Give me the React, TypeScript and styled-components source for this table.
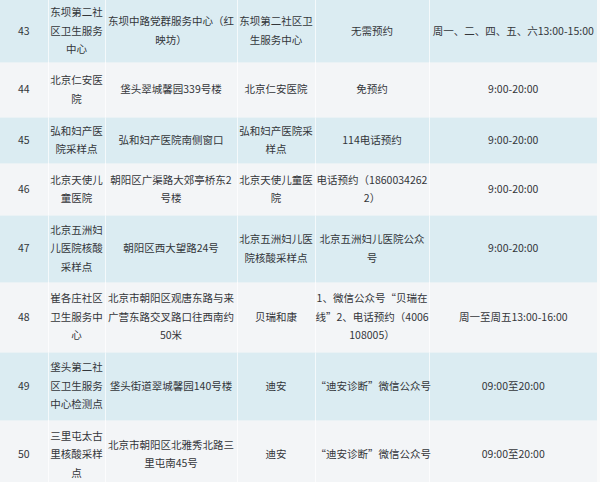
import React from 'react';
import styled, { createGlobalStyle } from 'styled-components';

const GlobalStyle = createGlobalStyle`
  html, body {
    margin: 0;
    padding: 0;
    background: #fafafa;
    overflow: hidden;
  }
  body {
    font-family: "Noto Sans CJK SC", "Noto Sans", sans-serif;
  }
`;

const Page = styled.div`
  width: 600px;
  height: 482px;
  overflow: hidden;
  background: #fafafa;
`;

const Table = styled.table`
  width: 597px;
  table-layout: fixed;
  border-collapse: collapse;
  color: #33363a;
  font-size: 10.5px;
  line-height: 18.5px;
`;

const Row = styled.tr<{ $tinted: boolean; $h: number }>`
  height: ${p => p.$h}px;
  background: ${p => (p.$tinted ? '#dbecf2' : '#f3f5f7')};
  & + & {
    border-top: 1px solid ${p => (p.$tinted ? '#eef5f8' : '#eaf2f5')};
  }
`;

const Cell = styled.td`
  padding: 0;
  text-align: center;
  vertical-align: middle;
  & + & {
    border-left: 1px solid rgba(255, 255, 255, 0.7);
  }
`;

const Line = styled.span`
  display: block;
  white-space: nowrap;
`;

type RowData = {
  no: string;
  h: number;
  cells: string[][];
};

const rows: RowData[] = [
  {
    no: '43',
    h: 62,
    cells: [
      ['东坝第二社', '区卫生服务', '中心'],
      ['东坝中路党群服务中心（红', '映坊）'],
      ['东坝第二社区卫', '生服务中心'],
      ['无需预约'],
      ['周一、二、四、五、六13:00-15:00'],
    ],
  },
  {
    no: '44',
    h: 55,
    cells: [
      ['北京仁安医', '院'],
      ['垡头翠城馨园339号楼'],
      ['北京仁安医院'],
      ['免预约'],
      ['9:00-20:00'],
    ],
  },
  {
    no: '45',
    h: 46,
    cells: [
      ['弘和妇产医', '院采样点'],
      ['弘和妇产医院南侧窗口'],
      ['弘和妇产医院采', '样点'],
      ['114电话预约'],
      ['9:00-20:00'],
    ],
  },
  {
    no: '46',
    h: 52,
    cells: [
      ['北京天使儿', '童医院'],
      ['朝阳区广渠路大郊亭桥东2', '号楼'],
      ['北京天使儿童医', '院'],
      ['电话预约（1860034262', '2）'],
      ['9:00-20:00'],
    ],
  },
  {
    no: '47',
    h: 67,
    cells: [
      ['北京五洲妇', '儿医院核酸', '采样点'],
      ['朝阳区西大望路24号'],
      ['北京五洲妇儿医', '院核酸采样点'],
      ['北京五洲妇儿医院公众', '号'],
      ['9:00-20:00'],
    ],
  },
  {
    no: '48',
    h: 70,
    cells: [
      ['崔各庄社区', '卫生服务中', '心'],
      ['北京市朝阳区观唐东路与来', '广营东路交叉路口往西南约', '50米'],
      ['贝瑞和康'],
      ['1、微信公众号“贝瑞在', '线”2、电话预约（4006', '108005）'],
      ['周一至周五13:00-16:00'],
    ],
  },
  {
    no: '49',
    h: 68,
    cells: [
      ['垡头第二社', '区卫生服务', '中心检测点'],
      ['垡头街道翠城馨园140号楼'],
      ['迪安'],
      ['“迪安诊断”微信公众号'],
      ['09:00至20:00'],
    ],
  },
  {
    no: '50',
    h: 68,
    cells: [
      ['三里屯太古', '里核酸采样', '点'],
      ['北京市朝阳区北雅秀北路三', '里屯南45号'],
      ['迪安'],
      ['“迪安诊断”微信公众号'],
      ['09:00至20:00'],
    ],
  },
];

const widths = [48, 57, 132, 78, 114, 168];

const App: React.FC = () => (
  <Page>
    <GlobalStyle />
    <Table>
      <colgroup>
        {widths.map((w, i) => (
          <col key={i} style={{ width: w }} />
        ))}
      </colgroup>
      <tbody>
        {rows.map((row, i) => (
          <Row key={row.no} $tinted={i % 2 === 0} $h={row.h}>
            <Cell>{row.no}</Cell>
            {row.cells.map((lines, j) => (
              <Cell key={j}>
                {lines.map((l, k) => (
                  <Line key={k}>{l}</Line>
                ))}
              </Cell>
            ))}
          </Row>
        ))}
      </tbody>
    </Table>
  </Page>
);

export default App;
